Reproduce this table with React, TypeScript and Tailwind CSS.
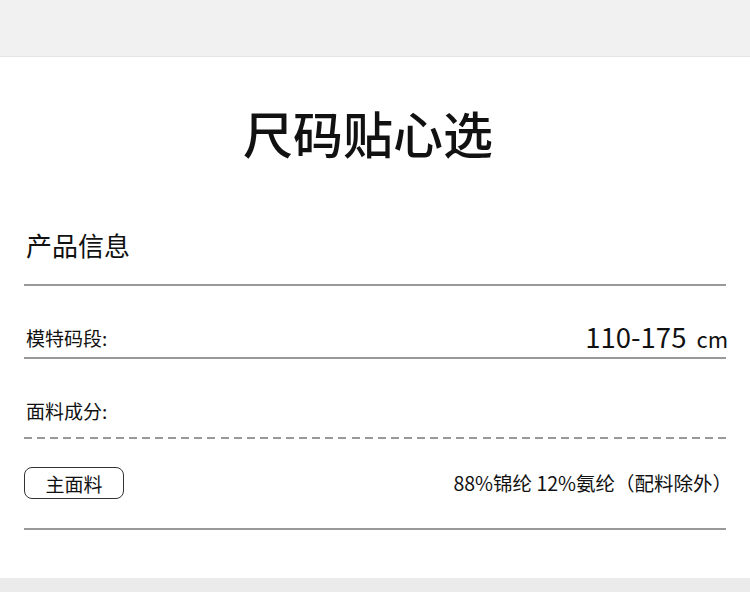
export default function App() {
  return (
    <div className="w-[750px] h-[592px] flex flex-col bg-white text-[#111] font-['Noto_Sans_CJK_SC','Noto_Sans',sans-serif]">
      {/* top grey band */}
      <div className="h-[57px] bg-[#f1f1f1] border-b border-[#e6e6e6]" />

      <div className="flex-1 flex flex-col px-6">
        <h1 className="mt-[50px] h-[50px] pr-[14px] text-[50px] leading-none text-center font-medium">
          尺码贴心选
        </h1>

        <div className="mt-[75px] h-[26px] text-[26px] leading-none pl-[2px]">产品信息</div>
        <div className="mt-[26px] h-[2px] bg-[#999]" />

        <div className="mt-[37px] mb-[6px] h-[28px] flex items-center justify-between">
          <span className="text-[19px] leading-none pl-[2px]">模特码段:</span>
          <span className="flex items-baseline gap-[10px] leading-none mr-[-2px]">
            <span className="text-[27.5px]">110-175</span>
            <span className="text-[22px]">cm</span>
          </span>
        </div>
        <div className="h-[2px] bg-[#999]" />

        <div className="mt-[42px] h-[20px] text-[19px] leading-none pl-[2px]">面料成分:</div>
        <div className="mt-[16px] h-[2px] bg-[repeating-linear-gradient(90deg,#999_0_8px,transparent_8px_13.1px)]" />

        <div className="mt-[28px] h-[32px] flex items-center justify-between">
          <div className="w-[100px] h-[32px] border border-[#333] rounded-[8px] flex items-center justify-center text-[19px] leading-none">
            主面料
          </div>
          <span className="text-[19.5px] leading-none mr-[-6px]">88%锦纶 12%氨纶（配料除外）</span>
        </div>
        <div className="mt-[29px] h-[2px] bg-[#999]" />
      </div>

      {/* bottom grey band */}
      <div className="h-[14px] bg-[#ebebeb]" />
    </div>
  )
}
